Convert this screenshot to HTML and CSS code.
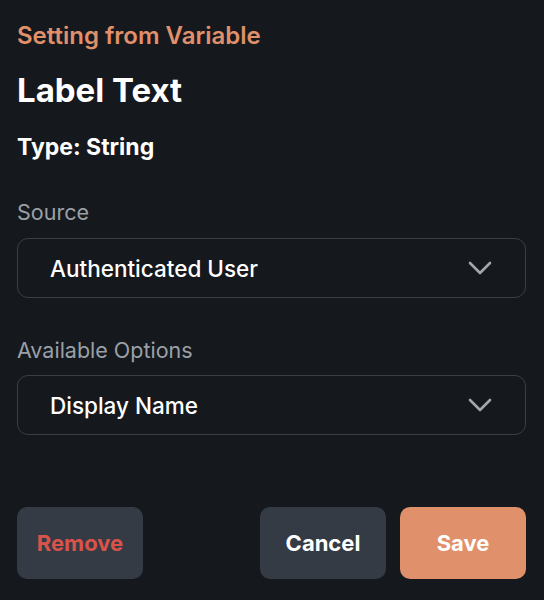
FILE: index.html
```html
<!DOCTYPE html>
<html>
<head>
<meta charset="utf-8">
<link rel="stylesheet" href="styles.css">
</head>
<body>
<div class="panel">
  <div class="eyebrow">Setting from Variable</div>
  <div class="title">Label Text</div>
  <div class="type">Type: String</div>

  <div class="field-label first">Source</div>
  <div class="select">
    <span class="select-text">Authenticated User</span>
    <svg class="chevron" width="24" height="14" viewBox="0 0 24 14"><path d="M2 2 L12 12 L22 2" fill="none" stroke="#a2a7ae" stroke-width="2.6" stroke-linecap="round" stroke-linejoin="round"/></svg>
  </div>

  <div class="field-label">Available Options</div>
  <div class="select">
    <span class="select-text">Display Name</span>
    <svg class="chevron" width="24" height="14" viewBox="0 0 24 14"><path d="M2 2 L12 12 L22 2" fill="none" stroke="#a2a7ae" stroke-width="2.6" stroke-linecap="round" stroke-linejoin="round"/></svg>
  </div>

  <div class="actions">
    <button class="btn btn-remove">Remove</button>
    <div class="right">
      <button class="btn btn-cancel">Cancel</button>
      <button class="btn btn-save">Save</button>
    </div>
  </div>
</div>
</body>
</html>
```
FILE: styles.css
```css
html, body {
  margin: 0;
  padding: 0;
  background: #15181c;
}
body {
  font-family: Inter, Roboto, "Liberation Sans", sans-serif;
  color: #ffffff;
}
.panel {
  width: 544px;
  height: 600px;
  box-sizing: border-box;
  padding: 22px 18px 0 17px;
  display: flex;
  flex-direction: column;
}
.eyebrow {
  font-size: 24px;
  line-height: 28px;
  font-weight: 600;
  color: #e0906a;
}
.title {
  margin-top: 20px;
  font-size: 33px;
  line-height: 40px;
  font-weight: 700;
}
.type {
  margin-top: 23px;
  font-size: 23px;
  line-height: 28px;
  font-weight: 700;
}
.field-label {
  margin-top: 39px;
  font-size: 21.5px;
  line-height: 26px;
  color: #9aa0a7;
}
.field-label.first {
  margin-top: 38px;
}
.select {
  height: 60px;
  box-sizing: border-box;
  border: 1px solid #3a3e45;
  border-radius: 11px;
  display: flex;
  align-items: center;
  justify-content: space-between;
  padding: 0 33px 0 32px;
}
.field-label + .select {
  margin-top: 12px;
}
.field-label.first + .select {
  margin-top: 13px;
}
.select-text {
  font-size: 22.5px;
  font-weight: 500;
  color: #ffffff;
}
.chevron {
  display: block;
}
.actions {
  margin-top: 72px;
  display: flex;
  justify-content: space-between;
}
.right {
  display: flex;
  gap: 14px;
}
.btn {
  width: 126px;
  height: 72px;
  border: none;
  border-radius: 10px;
  font-family: inherit;
  font-size: 22px;
  font-weight: 700;
  padding: 0;
}
.btn-remove {
  background: #353b45;
  color: #d9534a;
}
.btn-cancel {
  background: #353b45;
  color: #ffffff;
}
.btn-save {
  background: #e0906a;
  color: #ffffff;
}
```
